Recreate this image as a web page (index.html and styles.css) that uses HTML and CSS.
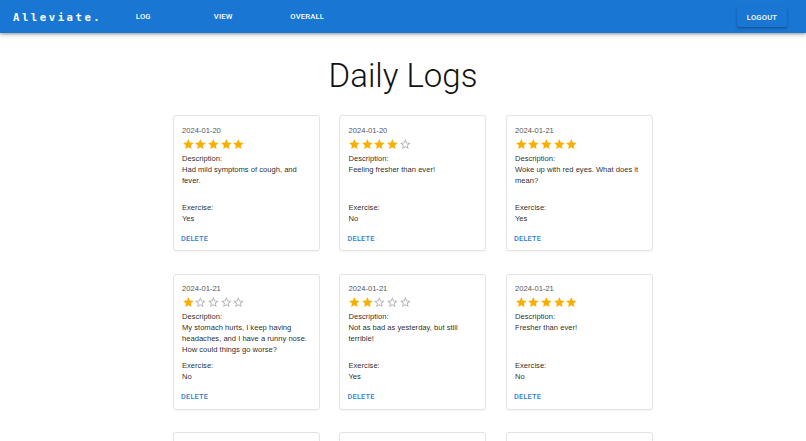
FILE: index.html
```html
<!DOCTYPE html>
<html lang="en">
<head>
  <meta charset="UTF-8" />
  <title>Daily Logs | Alleviate</title>
  <link rel="stylesheet" href="styles.css">
</head>
<body>
  <header class="appbar">
    <div class="logo">Alleviate.</div>
    <nav class="nav">
      <button class="nav-btn">Log</button>
      <button class="nav-btn">View</button>
      <button class="nav-btn">Overall</button>
    </nav>
    <button class="logout">Logout</button>
  </header>

  <main>
    <h1 class="title">Daily Logs</h1>
    <div class="grid" id="logs"></div>
  </main>

  <script>
    const logs = [
      { date: "2024-01-20", rating: 5, desc: "Had mild symptoms of cough, and fever.", exercise: "Yes" },
      { date: "2024-01-20", rating: 4, desc: "Feeling fresher than ever!", exercise: "No" },
      { date: "2024-01-21", rating: 5, desc: "Woke up with red eyes. What does it mean?", exercise: "Yes" },
      { date: "2024-01-21", rating: 1, desc: "My stomach hurts, I keep having headaches, and I have a runny nose. How could things go worse?", exercise: "No" },
      { date: "2024-01-21", rating: 2, desc: "Not as bad as yesterday, but still terrible!", exercise: "Yes" },
      { date: "2024-01-21", rating: 5, desc: "Fresher than ever!", exercise: "No" },
      { date: "2024-01-22", rating: 3, desc: "Slept well, a bit tired.", exercise: "Yes" },
      { date: "2024-01-22", rating: 4, desc: "Much better today.", exercise: "No" },
      { date: "2024-01-23", rating: 5, desc: "All good.", exercise: "Yes" }
    ];

    const star = '<svg viewBox="0 0 24 24"><path d="M12 17.27 18.18 21l-1.64-7.03L22 9.24l-7.19-.61L12 2 9.19 8.63 2 9.24l5.46 4.73L5.82 21z"/></svg>';
    const starEmpty = '<svg viewBox="0 0 24 24"><path d="m22 9.24-7.19-.62L12 2 9.19 8.63 2 9.24l5.46 4.73L5.82 21 12 17.27 18.18 21l-1.63-7.03L22 9.24zM12 15.4l-3.76 2.27 1-4.28-3.32-2.88 4.38-.38L12 6.1l1.71 4.04 4.38.38-3.32 2.88 1 4.28L12 15.4z"/></svg>';

    const grid = document.getElementById("logs");
    logs.forEach(function(log) {
      let stars = "";
      for (let i = 1; i <= 5; i++) {
        stars += i <= log.rating ? '<span class="star full">' + star + '</span>' : '<span class="star empty">' + starEmpty + '</span>';
      }
      const card = document.createElement("div");
      card.className = "card";
      card.innerHTML =
        '<div class="card-body">' +
          '<div class="date">' + log.date + '</div>' +
          '<div class="stars">' + stars + '</div>' +
          '<div class="label">Description:</div>' +
          '<div class="desc">' + log.desc + '</div>' +
          '<div class="label">Exercise:</div>' +
          '<div class="value">' + log.exercise + '</div>' +
        '</div>' +
        '<div class="card-actions"><button class="delete">Delete</button></div>';
      grid.appendChild(card);
    });
  </script>
</body>
</html>
```

FILE: styles.css
```css
body {
  margin: 0;
  background: #fff;
  font-family: "Liberation Sans", Arial, sans-serif;
  color: rgba(0, 0, 0, 0.87);
  overflow: hidden;
}
button {
  border: 0;
  background: none;
  cursor: pointer;
  font-family: Roboto, "Liberation Sans", sans-serif;
}
.appbar {
  height: 33px;
  background: #1976d2;
  display: flex;
  align-items: center;
  padding: 0 19px 0 13px;
  box-shadow: 0 1px 2px rgba(0, 0, 0, 0.2), 0 2px 4px rgba(0, 0, 0, 0.14), 0 1px 5px rgba(0, 0, 0, 0.12);
}
.logo {
  font-family: "DejaVu Sans Mono", "Liberation Mono", monospace;
  font-weight: 700;
  font-size: 10.6px;
  letter-spacing: 2.55px;
  color: #fff;
}
.nav {
  flex: 1;
  display: flex;
  gap: 46px;
  margin-left: 24px;
}
.nav-btn {
  min-width: 34px;
  padding: 0 4px;
  color: #fff;
  font-size: 7.6px;
  font-weight: 500;
  text-transform: uppercase;
  letter-spacing: 0.2px;
  line-height: 16px;
}
.logout {
  width: 50px;
  height: 20px;
  margin-top: 1px;
  background: #1976d2;
  color: #fff;
  border-radius: 2px;
  font-size: 7.6px;
  font-weight: 500;
  text-transform: uppercase;
  letter-spacing: 0.2px;
  box-shadow: 0 1px 2px rgba(0, 0, 0, 0.22), 0 2px 3px rgba(0, 0, 0, 0.12);
}
.title {
  margin: 21px 0 0;
  text-align: center;
  font-family: Roboto, "Liberation Sans", sans-serif;
  font-weight: 300;
  font-size: 33px;
  line-height: 44px;
  color: #111;
}
.grid {
  display: grid;
  grid-template-columns: repeat(3, 147px);
  column-gap: 19.5px;
  row-gap: 22.5px;
  margin: 17px 0 0 172.5px;
}
.card {
  height: 136px;
  box-sizing: border-box;
  border: 1px solid #e3e3e3;
  border-radius: 3px;
  box-shadow: 0 1px 1px rgba(0, 0, 0, 0.04);
  display: flex;
  flex-direction: column;
  justify-content: space-between;
}
.card-body {
  padding: 8.5px 8.5px 0;
  font-size: 7.6px;
  line-height: 11px;
}
.date {
  color: #555;
}
.stars {
  display: flex;
  height: 13px;
  margin: 2px 0 2px -0.5px;
}
.star svg {
  width: 12.7px;
  height: 12.7px;
  display: block;
}
.full svg {
  fill: #faaf00;
}
.empty svg {
  fill: rgba(0, 0, 0, 0.3);
}
.desc {
  height: 33px;
  margin-bottom: 5px;
}
.card-actions {
  padding: 0 4px 4px;
}
.delete {
  height: 16px;
  padding: 0 3.5px;
  color: #2f7fcf;
  font-size: 7.4px;
  font-weight: 500;
  text-transform: uppercase;
  letter-spacing: 0.2px;
}
```
